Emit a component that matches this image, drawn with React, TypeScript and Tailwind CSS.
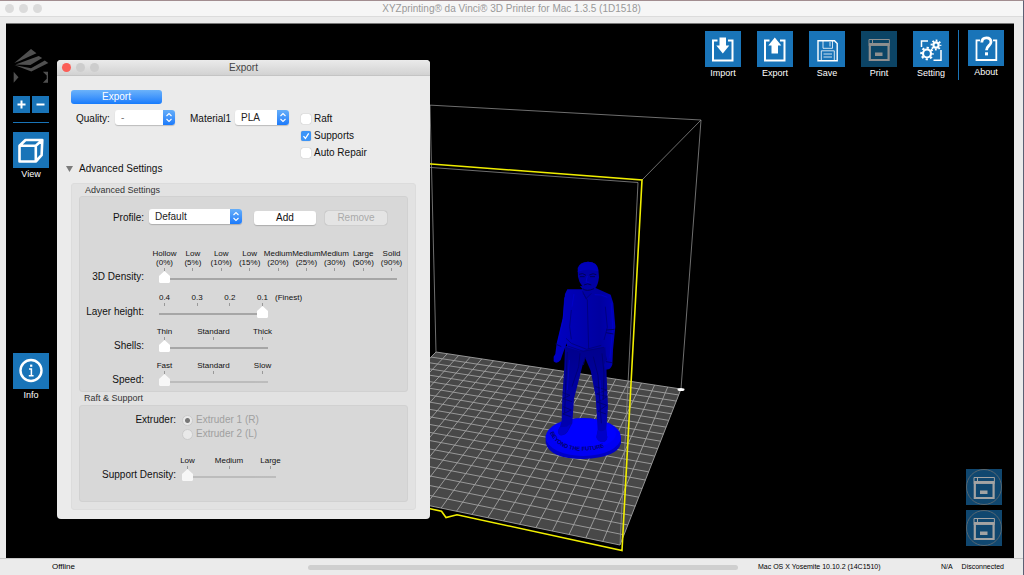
import React, { useId } from "react";

type Point = [number, number];

/* ---------- Icons ---------- */

function TrayFrame() {
  return <path d="M12.5 9.5H8V29.5H27.5V9.5H23" fill="none" stroke="#fff" strokeWidth="2" />;
}

function ImportIcon() {
  return (
    <svg viewBox="0 0 36 36" className="size-9" aria-hidden="true">
      <TrayFrame />
      <path d="M14.5 6.5H21V14.5H24.3L17.8 22.5L11.3 14.5H14.5Z" fill="#fff" />
    </svg>
  );
}

function ExportIcon() {
  return (
    <svg viewBox="0 0 36 36" className="size-9" aria-hidden="true">
      <TrayFrame />
      <path d="M14.5 22.5H21V14.5H24.3L17.8 6.5L11.3 14.5H14.5Z" fill="#fff" />
    </svg>
  );
}

function SaveIcon() {
  return (
    <svg viewBox="0 0 36 36" className="size-9" fill="none" stroke="#fff" aria-hidden="true">
      <path d="M9 9.8H25.5L28.2 12.5V29.8H9Z" strokeWidth="1.4" />
      <path d="M14 10V17.3H23.5V10M21 11V15.5" strokeWidth=".8" />
      <path d="M12.3 29.5V19.8H25.3V29.5M14.5 23H23M14.5 26H23" strokeWidth=".8" />
    </svg>
  );
}

function PrinterIcon({ color }: { color: string }) {
  return (
    <svg viewBox="0 0 36 36" className="size-9" fill="none" stroke={color} aria-hidden="true">
      <path d="M8 8.5H28.4V12.5H8ZM11.5 8.5V12" strokeWidth="1" />
      <path d="M8.8 13.5V29H27.6V13.5Z" strokeWidth="2.2" />
      <path d="M7.7 13.6H28.7" strokeWidth="2.6" />
      <rect x="14" y="21.5" width="7.5" height="3.5" fill={color} stroke="none" />
    </svg>
  );
}

function Gear({ x, y, r }: { x: number; y: number; r: number }) {
  const step = (2 * Math.PI * r) / 16;
  return (
    <g fill="none" stroke="#fff">
      <circle cx={x} cy={y} r={r} strokeWidth="2" strokeDasharray={`${step} ${step}`} strokeDashoffset={step / 2} />
      <circle cx={x} cy={y} r={r - 1.8} strokeWidth="2.2" />
    </g>
  );
}

function SettingIcon() {
  return (
    <svg viewBox="0 0 36 36" className="size-9" aria-hidden="true">
      <path d="M15 10H8.5V16M28 19V29.3H20.5" fill="none" stroke="#fff" strokeWidth="1.5" />
      <Gear x={14} y={22.5} r={5.8} />
      <Gear x={23} y={14} r={4.4} />
    </svg>
  );
}

function AboutIcon() {
  return (
    <svg viewBox="0 0 36 36" className="size-9" fill="none" stroke="#fff" aria-hidden="true">
      <path d="M12 10.3H8.5V30H28.3V10.3H25" strokeWidth="1.8" />
      <path d="M13.8 12.6C13.8 9.2 15.6 7.8 18.4 7.8C21.3 7.8 23 9.4 23 12C23 15.6 18.5 15.8 18.5 20.3" strokeWidth="2.8" />
      <path d="M18.5 22.3V25.4" strokeWidth="3" />
    </svg>
  );
}

function CubeIcon() {
  return (
    <svg viewBox="0 0 36 36" className="size-9" fill="none" stroke="#fff" strokeWidth="2.6" strokeLinejoin="round" aria-hidden="true">
      <path d="M6.5 13.8H22.8V29.5H6.5ZM6.5 13.8L12.5 8H29.3L22.8 13.8M29.3 8L28.6 23.2L22.8 29.5" />
    </svg>
  );
}

function InfoIcon() {
  return (
    <svg viewBox="0 0 36 36" className="size-9" fill="none" stroke="#fff" aria-hidden="true">
      <circle cx="18" cy="17.5" r="10.5" strokeWidth="2.4" />
      <path d="M16 15.9H18.4V22.6M15.8 22.8H20.6" strokeWidth="1.5" />
      <path d="M18.2 11.6V13.8" strokeWidth="2.2" />
    </svg>
  );
}

function Logo() {
  return (
    <svg viewBox="40 147 108 106" className="h-[34px] w-9" fill="#505050" aria-hidden="true">
      <path d="M94 147L111 160L60 184L42 191Z" />
      <path d="M46 195L118 169L129 175L92 197Z" />
      <path d="M42 197L94 207L137 183L148 191L95 217Z" />
      <path d="M40 218L55 235L40 252Z" />
      <path d="M131 218H147V252H131L143 240V230Z" />
    </svg>
  );
}

/* ---------- 3D scene ---------- */

const BED: [Point, Point, Point, Point] = [
  [436, 352],
  [681, 389],
  [620, 545],
  [310, 481],
];
const CELLS = 20;

// Maps the unit square onto the bed's four corners in perspective.
function project(u: number, v: number): Point {
  const [[x0, y0], [x1, y1], [x2, y2], [x3, y3]] = BED;
  const dx1 = x1 - x2, dx2 = x3 - x2, sx = x0 - x1 + x2 - x3;
  const dy1 = y1 - y2, dy2 = y3 - y2, sy = y0 - y1 + y2 - y3;
  const det = dx1 * dy2 - dx2 * dy1;
  const g = (sx * dy2 - dx2 * sy) / det;
  const h = (dx1 * sy - sx * dy1) / det;
  const w = g * u + h * v + 1;
  return [
    ((x1 - x0 + g * x1) * u + (x3 - x0 + h * x3) * v + x0) / w,
    ((y1 - y0 + g * y1) * u + (y3 - y0 + h * y3) * v + y0) / w,
  ];
}

function bedGrid(): string {
  let d = "";
  for (let i = 0; i <= CELLS; i++) {
    const t = i / CELLS;
    d += `M${project(t, 0)}L${project(t, 1)}M${project(0, t)}L${project(1, t)}`;
  }
  return d;
}

function Figure() {
  return (
    <g transform="translate(530 250) scale(.3333)">
      <defs>
        <linearGradient id="torso" x1="0" x2="1">
          <stop offset="0" stopColor="#0000c4" />
          <stop offset=".3" stopColor="#0000b4" />
          <stop offset=".75" stopColor="#0000a0" />
          <stop offset="1" stopColor="#0000b8" />
        </linearGradient>
        <linearGradient id="legs" x1="0" x2="0" y1="0" y2="1">
          <stop offset="0" stopColor="#00008c" />
          <stop offset="1" stopColor="#0000b8" />
        </linearGradient>
        <path id="rim" d="M60 548Q85 604 160 602Q232 600 258 566" />
      </defs>
      <path d="M47 555V578Q58 626 160 627Q262 624 273 580V560Z" fill="#0000c4" />
      <ellipse cx="160" cy="561" rx="113" ry="57" fill="#0000f4" />
      <ellipse cx="160" cy="551" rx="98" ry="45" fill="#00f" />
      <text fontSize="17" fontWeight="700" fill="#00006c" className="font-['Liberation_Sans',sans-serif]">
        <textPath href="#rim">BEYOND THE FUTURE</textPath>
      </text>
      <path d="M105 288L103 350L97 440L95 512L90 530Q78 548 90 556Q108 558 116 540L127 520L132 446L158 345L166 325L182 362L197 440L203 540L199 562Q204 578 222 576Q236 570 230 552L229 535L234 470L230 378L228 290Z" fill="url(#legs)" />
      <path d="M89 532Q79 548 91 555Q106 557 114 541L122 522L110 530ZM204 540L199 562Q204 578 222 576Q236 570 230 552L227 538Q216 548 204 540Z" fill="#0000c8" />
      <path d="M150 108L158 118L112 118L105 132L98 205L80 280L76 312L71 320V334Q80 344 92 330L98 312L110 280L112 292L150 303L226 292L229 330L222 345L226 358Q240 362 247 344L249 300L256 230L250 160L242 134L192 112Z" fill="url(#torso)" />
      <path d="M143 54Q150 35 174 35Q202 36 205 58L207 82Q204 108 195 115L190 132L170 146L156 130L159 112Q146 96 144 80Z" fill="#0000a4" />
      <path d="M143 66Q145 37 174 35Q203 36 205 64Q172 54 143 66Z" fill="#0000ba" />
      <path d="M147 73Q158 67 168 76M178 75Q190 68 199 74M150 80H164M180 80H195M162 105Q173 98 184 105M158 116Q170 126 192 116" fill="none" stroke="#000058" strokeWidth="3" />
      <path d="M172 78L168 96L178 97" fill="none" stroke="#0000c8" strokeWidth="3" />
      <path d="M160 130L172 150L176 298M158 124L168 146L184 130M124 180L119 230L124 268M226 170L232 232L222 270M113 288L160 304L222 292M108 265L124 280L170 298L214 286" fill="none" stroke="#000078" strokeWidth="2.5" />
      <path d="M112 306L108 380L104 490M150 310L146 350L126 410M190 320L204 376L214 520M216 310L222 370L220 450M98 428L120 436L98 446L126 455M99 470L124 480L98 492L122 500M196 410L230 420L200 432L232 440L201 456L230 466L204 484L228 492" fill="none" stroke="#000070" strokeWidth="2.5" />
      <path d="M104 142L100 206L84 276M244 160L248 230L240 325M132 132L126 170M194 134Q214 132 232 142M118 330L112 420M210 390L214 450" fill="none" stroke="#0000d0" strokeWidth="3" opacity=".7" />
      <path d="M166 322L160 345M77 282L94 290M228 335L246 338M229 240L254 238M228 248L250 252" fill="none" stroke="#000068" strokeWidth="3" />
    </g>
  );
}

function Scene() {
  return (
    <svg viewBox="6 24 1007 534" preserveAspectRatio="xMinYMin meet" className="absolute inset-0 h-full w-full" role="img" aria-label="Build volume with model">
      <polygon points={BED.map((p) => p.join(",")).join(" ")} fill="#484848" />
      <path d={bedGrid()} fill="none" stroke="#a2a2a2" strokeWidth=".9" />
      <g fill="none" stroke="#8a8a8a" strokeWidth=".8">
        <path d="M300 98L701 120L681 389M701 120L642 180M430 105L436 352" />
      </g>
      <Figure />
      <path d="M300 158L638 182.500L620 545" fill="none" stroke="#8a8a8a" strokeWidth=".8" />
      <path d="M300 154L642 180L622 550.500L457 514.700L446 517.500L441.500 511.300L300 480" fill="none" stroke="#f0ee00" strokeWidth="1.600" />
      <ellipse cx="681" cy="389.500" rx="3.500" ry="1.500" fill="#fff" />
    </svg>
  );
}

/* ---------- Window chrome ---------- */

function Lights({ active = false }: { active?: boolean }) {
  return (
    <div className="flex gap-[5px]">
      <span className={`size-[9px] rounded-full ${active ? "bg-[#fb5e57]" : "bg-[#dbdbdb]"}`} />
      <span className={`size-[9px] rounded-full ${active ? "bg-[#cdcdcd]" : "bg-[#dbdbdb]"}`} />
      <span className={`size-[9px] rounded-full ${active ? "bg-[#cdcdcd]" : "bg-[#dbdbdb]"}`} />
    </div>
  );
}

function ToolButton({ label, disabled = false, children }: { label: string; disabled?: boolean; children: React.ReactNode }) {
  return (
    <button type="button" disabled={disabled} className="flex w-9 flex-col items-center text-[9px] leading-3 text-white">
      <span className={disabled ? "bg-[#0c4465]" : "bg-[#1974b8]"}>{children}</span>
      <span>{label}</span>
    </button>
  );
}

function MonitorButton({ label }: { label: string }) {
  return (
    <button type="button" aria-label={label} className="relative size-9 bg-[#10476f]">
      <PrinterIcon color="#a3a3a3" />
      <span className="absolute inset-0 rounded-full border border-[#56666f]" />
    </button>
  );
}

/* ---------- Form controls ---------- */

function PopUp({ id, value, className, muted = false }: { id: string; value: string; className: string; muted?: boolean }) {
  return (
    <span className={`relative block h-[15px] ${className}`}>
      <select id={id} defaultValue={value} className={`block h-full w-full appearance-none rounded-[3px] bg-white pl-[6px] text-[10px] leading-[15px] shadow-[0_1px_1px_rgba(0,0,0,0.2)] ${muted ? "text-[#777]" : "text-[#222]"}`}>
        <option>{value}</option>
      </select>
      <span className="pointer-events-none absolute inset-y-0 right-0 w-3 rounded-r-[3px] bg-linear-to-b from-[#66aef8] to-[#1a7afb]">
        <svg viewBox="0 0 12 15" className="h-full w-full" fill="none" stroke="#fff" strokeWidth="1.1" aria-hidden="true">
          <path d="M3.500 6L6 3.500L8.500 6M3.500 9L6 11.500L8.500 9" />
        </svg>
      </span>
    </span>
  );
}

function Check({ label, checked = false }: { label: string; checked?: boolean }) {
  return (
    <label className="flex h-[17px] items-center gap-[3px]">
      <span className="relative block size-[10px]">
        <input type="checkbox" defaultChecked={checked} className="block size-full appearance-none rounded-[2px] bg-white shadow-[0_0_1px_rgba(0,0,0,0.4)] checked:bg-[#3b94f8]" />
        {checked && (
          <svg viewBox="0 0 10 10" className="pointer-events-none absolute inset-0" fill="none" stroke="#fff" strokeWidth="1.3" aria-hidden="true">
            <path d="M2.500 5.200L4.400 7.500L7.700 2.300" />
          </svg>
        )}
      </span>
      {label}
    </label>
  );
}

type SliderProps = {
  label: string;
  labelClass: string;
  widthClass: string;
  marks: string[][];
  value?: number;
  disabled?: boolean;
  note?: string;
};

function MarkedSlider({ label, labelClass, widthClass, marks, value = 0, disabled = false, note }: SliderProps) {
  const id = useId();
  return (
    <div className="flex items-end">
      <label htmlFor={id} className={`text-right leading-[14px] whitespace-nowrap ${labelClass}`}>
        {label}
      </label>
      <div className={widthClass}>
        <div className="flex justify-between px-[5px] text-[8px] leading-[9px]">
          {marks.map((lines, i) => (
            <div key={i} className="flex w-px flex-col items-center whitespace-nowrap">
              {lines.map((line) => (
                <span key={line}>{line}</span>
              ))}
              <span className="mt-px h-[3px] w-px bg-[#999]" />
            </div>
          ))}
        </div>
        <input
          id={id}
          type="range"
          min={0}
          max={marks.length - 1}
          defaultValue={value}
          disabled={disabled}
          className="block h-[13px] w-full appearance-none bg-transparent disabled:opacity-80 [&::-webkit-slider-runnable-track]:h-[13px] [&::-webkit-slider-runnable-track]:bg-[linear-gradient(transparent_7px,#a6a6a6_7px,#a6a6a6_9px,transparent_9px)] disabled:[&::-webkit-slider-runnable-track]:bg-[linear-gradient(transparent_7px,#b6b6b6_7px,#b6b6b6_9px,transparent_9px)] [&::-webkit-slider-thumb]:h-3 [&::-webkit-slider-thumb]:w-[11px] [&::-webkit-slider-thumb]:appearance-none [&::-webkit-slider-thumb]:bg-white [&::-webkit-slider-thumb]:[clip-path:polygon(50%_0,100%_42%,100%_92%,92%_100%,8%_100%,0_92%,0_42%)]"
        />
      </div>
      {note && <span className="ml-[7px] self-start text-[8px] leading-[9px]">{note}</span>}
    </div>
  );
}

const DENSITIES = [
  ["Hollow", "(0%)"],
  ["Low", "(5%)"],
  ["Low", "(10%)"],
  ["Low", "(15%)"],
  ["Medium", "(20%)"],
  ["Medium", "(25%)"],
  ["Medium", "(30%)"],
  ["Large", "(50%)"],
  ["Solid", "(90%)"],
];

function ExportDialog() {
  const column = "mr-[15px] w-[64px]";
  return (
    <section aria-label="Export" className="absolute top-[36px] left-[51px] w-[373px] overflow-hidden rounded-[4px] bg-[#ebebeb] pb-[9px] text-[10px] text-[#111]">
      <header className="grid h-4 grid-cols-[1fr_auto_1fr] items-center border-b border-[#c4c4c4] bg-linear-to-b from-[#ebebeb] to-[#d2d2d2] px-[5px]">
        <Lights active />
        <h2 className="leading-[14px] text-[#444]">Export</h2>
      </header>

      <div className="px-[14px] pt-[14px]">
        <button type="button" className="block h-[14px] w-[91px] rounded-[3px] bg-linear-to-b from-[#6bb2fa] to-[#147bfc] leading-[14px] text-white">
          Export
        </button>
        <div className="mt-[6px] flex items-start pl-[5px]">
          <label htmlFor="quality" className="w-[39px] leading-[18px]">Quality:</label>
          <PopUp id="quality" value="-" muted className="w-[60px]" />
          <label htmlFor="material" className="ml-[15px] w-[45px] leading-[17px]">Material1</label>
          <PopUp id="material" value="PLA" className="w-[54px]" />
          <div className="ml-3">
            <Check label="Raft" />
            <Check label="Supports" checked />
            <Check label="Auto Repair" />
          </div>
        </div>
      </div>

      <button type="button" aria-expanded="true" className="flex h-[15px] items-center gap-[6px] pl-[9px]">
        <svg viewBox="0 0 7 6" className="h-[6px] w-[7px]" fill="#7b7b7b" aria-hidden="true">
          <path d="M0 0H7L3.500 6Z" />
        </svg>
        Advanced Settings
      </button>

      <div className="mx-[14px] mt-[7px] rounded-[3px] border border-[#dcdcdc] bg-[#e2e2e2] px-[7px] pb-[7px]">
        <h3 className="pl-[6px] text-[9px] leading-3 text-[#333]">Advanced Settings</h3>
        <div className="rounded-[3px] border border-[#d1d1d1] bg-[#d8d8d8] pt-3 pb-1">
          <div className="flex items-start">
            <label htmlFor="profile" className="mr-[5px] w-[64px] text-right leading-[18px]">Profile:</label>
            <PopUp id="profile" value="Default" className="w-[93px]" />
            <button type="button" className="mt-[2px] ml-3 h-[14px] w-[62px] rounded-[3px] bg-white leading-[14px] shadow-[0_1px_1px_rgba(0,0,0,0.2)]">Add</button>
            <button type="button" disabled className="mt-[2px] ml-[9px] h-[14px] w-[62px] rounded-[3px] bg-[#e4e4e4] leading-[14px] text-[#aaa] shadow-[0_0_1px_rgba(0,0,0,0.4)]">Remove</button>
          </div>
          <div className="mt-[22px] mb-[9px]">
            <MarkedSlider label="3D Density:" labelClass={column} widthClass="w-[238px]" marks={DENSITIES} />
          </div>
          <div className="flex flex-col gap-2">
            <MarkedSlider label="Layer height:" labelClass={column} widthClass="w-[109px]" marks={[["0.4"], ["0.3"], ["0.2"], ["0.1"]]} value={3} note="(Finest)" />
            <MarkedSlider label="Shells:" labelClass={column} widthClass="w-[109px]" marks={[["Thin"], ["Standard"], ["Thick"]]} />
            <MarkedSlider label="Speed:" labelClass={column} widthClass="w-[109px]" marks={[["Fast"], ["Standard"], ["Slow"]]} disabled />
          </div>
        </div>

        <h3 className="pl-[5px] text-[9px] leading-[13px] text-[#333]">Raft &amp; Support</h3>
        <div className="rounded-[3px] border border-[#d1d1d1] bg-[#d8d8d8] pt-[7px] pb-[19px]">
          <fieldset className="mb-[15px] flex">
            <legend className="float-left mr-[6px] w-[96px] text-right leading-[14px]">Extruder:</legend>
            <div className="text-[#a0a0a0]">
              {["Extruder 1 (R)", "Extruder 2 (L)"].map((name, i) => (
                <label key={name} className="flex h-[14px] items-center gap-[3px] leading-[14px]">
                  <input type="radio" name="extruder" disabled defaultChecked={i === 0} className="size-[11px] appearance-none rounded-full border border-[#cbcbcb] bg-[#e9e9e9] checked:bg-[radial-gradient(circle,#777_2px,#e9e9e9_3px)]" />
                  {name}
                </label>
              ))}
            </div>
          </fieldset>
          <MarkedSlider label="Support Density:" labelClass="mr-[6px] w-[96px]" widthClass="w-[94px]" marks={[["Low"], ["Medium"], ["Large"]]} disabled />
        </div>
      </div>
    </section>
  );
}

/* ---------- Application ---------- */

export default function App() {
  return (
    <div className="flex min-h-screen flex-col border-t border-r border-t-[#a28d90] border-r-[#5c6074] bg-[#ebebeb] font-['Liberation_Sans',Arial,sans-serif]">
      <header className="grid h-4 grid-cols-[1fr_auto_1fr] items-center border-b border-[#dcdcdc] bg-[#f6f6f6] px-[5px]">
        <Lights />
        <h1 className="text-[10px] leading-[15px] text-[#999]">XYZprinting® da Vinci® 3D Printer for Mac 1.3.5 (1D1518)</h1>
      </header>

      <main className="relative mt-[6px] mr-[9px] ml-[6px] flex flex-1 justify-between border-t border-[#777] bg-black">
        <Scene />

        <nav aria-label="View" className="relative flex w-[43px] flex-col pt-[25px] pl-[7px]">
          <Logo />
          <div className="mt-[13px] grid h-[17px] grid-cols-2 gap-[2px]">
            <button type="button" aria-label="Zoom in" className="bg-[#1974b8]">
              <svg viewBox="0 0 17 17" className="size-[17px]" stroke="#fff" strokeWidth="2" aria-hidden="true">
                <path d="M4.500 8.500H12.500M8.500 4.500V12.500" />
              </svg>
            </button>
            <button type="button" aria-label="Zoom out" className="bg-[#1974b8]">
              <svg viewBox="0 0 17 17" className="size-[17px]" stroke="#fff" strokeWidth="2" aria-hidden="true">
                <path d="M4.500 8.500H12.500" />
              </svg>
            </button>
          </div>
          <div className="my-[9px] h-px bg-[#1974b8]" />
          <ToolButton label="View"><CubeIcon /></ToolButton>
          <div className="mt-[173px]">
            <ToolButton label="Info"><InfoIcon /></ToolButton>
          </div>
        </nav>

        <div className="relative flex flex-col items-end justify-between pt-[6px] pr-[10px] pb-3">
          <div role="toolbar" aria-label="Main" className="flex">
            <div className="flex gap-4 pt-px">
              <ToolButton label="Import"><ImportIcon /></ToolButton>
              <ToolButton label="Export"><ExportIcon /></ToolButton>
              <ToolButton label="Save"><SaveIcon /></ToolButton>
              <ToolButton label="Print" disabled><PrinterIcon color="#8f8f8f" /></ToolButton>
              <ToolButton label="Setting"><SettingIcon /></ToolButton>
            </div>
            <div className="mx-[9px] h-[50px] w-px bg-[#1974b8]" />
            <ToolButton label="About"><AboutIcon /></ToolButton>
          </div>
          <div className="flex flex-col gap-[5px] pr-[2px]">
            <MonitorButton label="Printer status" />
            <MonitorButton label="Printer queue" />
          </div>
        </div>

        <ExportDialog />
      </main>

      <footer className="flex h-[17px] items-center border-t border-[#c8c8c8] text-[8px] text-black">
        <span className="w-[308px] pl-[52px]">Offline</span>
        <div role="progressbar" aria-label="Progress" className="h-[5px] flex-1 rounded-full bg-[#cfcfcf]" />
        <div className="flex w-[285px] justify-between pr-[19px] pl-5 text-[7px]">
          <span>Mac OS X Yosemite 10.10.2 (14C1510)</span>
          <span className="flex gap-[9px]">
            <span>N/A</span>
            <span>Disconnected</span>
          </span>
        </div>
      </footer>
    </div>
  );
}
